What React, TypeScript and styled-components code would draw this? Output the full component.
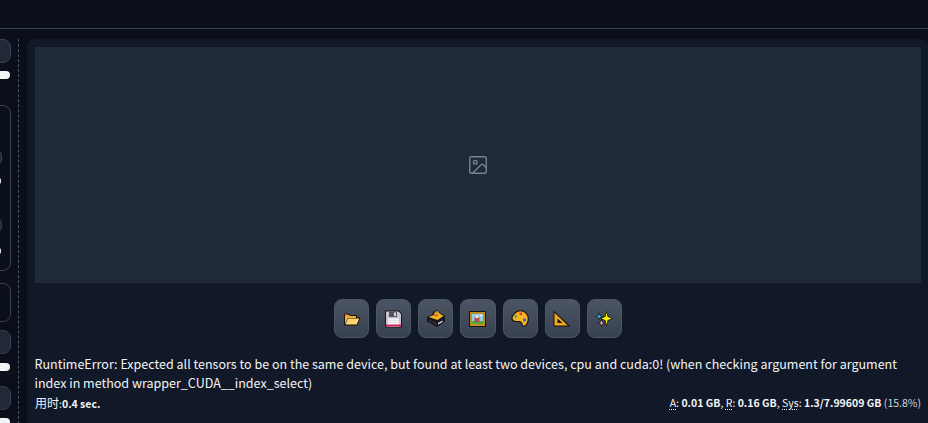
import React from "react";
import styled, { createGlobalStyle } from "styled-components";
import { ImageIcon } from "lucide-react";

const Global = createGlobalStyle`
  html, body { margin: 0; padding: 0; background: #0b0f19; overflow: hidden; }
  body { width: 928px; height: 423px; font-family: "Noto Sans CJK SC", "Noto Sans", sans-serif; }
`;
const Page = styled.div`
  width: 928px; height: 423px; display: flex; flex-direction: column; overflow: hidden; background: #0b0f19;
`;
const TopBar = styled.header`
  height: 28px; flex: none; border-bottom: 1px solid #374151; background: #0b0f19;
`;
const Body = styled.div`
  flex: 1; display: flex; min-height: 0; padding-top: 10px;
`;
const Sidebar = styled.aside`
  width: 18px; flex: none; height: 400px; overflow: hidden; display: flex; flex-direction: column; align-items: flex-end;
  border-right: 1px dashed #4b5563; box-sizing: content-box;
`;
const SideInner = styled.div`
  width: 100px; padding-right: 7px; flex: none; display: flex; flex-direction: column; align-items: stretch;
`;
const Field = styled.div<{ $h: number; $mt: number }>`
  height: ${p => p.$h}px; margin-top: ${p => p.$mt}px; background: #1f2937; border: 1px solid #374151; border-radius: 8px; box-sizing: border-box; flex: none;
`;
const Handle = styled.div<{ $mt: number }>`
  height: 8px; margin-top: ${p => p.$mt}px; margin-right: 1px; background: #f3f4f6; border-radius: 4px; flex: none;
`;
const Group = styled.div`
  height: 166px; margin-top: 26px; border: 1px solid #374151; border-radius: 8px; box-sizing: border-box; flex: none;
  padding: 42px 8px 0 0; display: flex; flex-direction: column; align-items: stretch;
`;
const Outlined = styled.div`
  height: 39px; margin-top: 12px; border: 1px solid #374151; border-radius: 8px; box-sizing: border-box; flex: none;
`;
const Main = styled.main`
  flex: 1; margin-left: 8px; margin-right: 0; height: 390px; background: #111827; border-radius: 8px 8px 0 8px;
  padding: 8px 7px 0 8px; box-sizing: border-box; display: flex; flex-direction: column;
`;
const Preview = styled.div`
  height: 236px; flex: none; background: #1f2937; display: flex; align-items: center; justify-content: center; color: #7b8390;
`;
const Toolbar = styled.div`
  display: flex; justify-content: center; gap: 7px; margin-top: 16px; flex: none;
`;
const ToolButton = styled.button`
  width: 35.15px; height: 39px; padding: 0; display: flex; align-items: center; justify-content: center;
  background: linear-gradient(to bottom, #4b5563, #374151); border: 1px solid #4b5563; border-radius: 8px; box-sizing: border-box;
`;
const ErrorText = styled.div`
  margin-top: 16px; margin-left: -0.5px; font-size: 12.53px; line-height: 19px; color: #f3f4f6; width: 880px;
`;
const Footer = styled.div`
  display: flex; justify-content: space-between; font-size: 10.5px; line-height: 17px; color: #f3f4f6; margin-top: 2px;
`;
const Han = styled.span`font-size: 12px;`;
const Abbr = styled.abbr`
  text-decoration: underline dotted; text-underline-offset: 2px;
`;
const Dim = styled.span`color: #d1d5db;`;

const Icon = styled.svg`display: block;`;

const Folder = () => (
  <Icon width="18" height="14" viewBox="0 0 18 14">
    <path d="M1 1.500h5l1 1.500h7v2.500h3.500L14.500 13.500H1z" fill="#17140c" />
    <path d="M2 3h4l1 1h6v2H5l-3 6z" fill="#f5a93a" />
    <path d="M5 6.500h11.200l-2.400 6H2.400z" fill="#fdd575" />
    <path d="M1.800 1.800h3v1.500h-3z" fill="#d8353a" />
  </Icon>
);
const Floppy = () => (
  <Icon width="17" height="18" viewBox="0 0 17 18">
    <path d="M0 .5h14l3 3V17.500H0z" fill="#17171d" />
    <path d="M1 1.500h12.500l2.500 2.500V16.500H1z" fill="#c9c4ce" />
    <path d="M4 1.500h8V7H4z" fill="#55535f" />
    <path d="M9 2.500h2V6H9z" fill="#d7d3da" />
    <path d="M3 8.500h11v8H3z" fill="#f3f0f3" />
    <path d="M3 10.500h11v.6H3zM3 12.500h11v.6H3z" fill="#d9d5dc" />
    <path d="M1 14.500h15v2H1z" fill="#d3245c" />
  </Icon>
);
const Box = () => (
  <Icon width="18" height="17" viewBox="0 0 18 17">
    <path d="M0 7l5-2 1-3 4-2 2 2 6 4v5.500l-8 5.500-10-5.500z" fill="#17171d" />
    <path d="M1.800 7l5-2 1-3 2.500-1 1.700 2 4.500 3-6 4z" fill="#f6b428" />
    <path d="M6 5l3-1.500 3 2-3 1.500zM9 2l2 1-1 .6-2-1z" fill="#c97f12" />
    <path d="M2 9l8 4v2.500L2 11z" fill="#2a2a30" />
    <path d="M11 13l4.500-2.500v1.500L11 14.500z" fill="#e8e8e8" />
  </Icon>
);
const Picture = () => (
  <Icon width="17" height="16" viewBox="0 0 17 16">
    <path d="M0 0h17v16H0z" fill="#17140c" />
    <path d="M1 1h15v14H1z" fill="#c08f22" />
    <path d="M3 3h11v10H3z" fill="#8ecdf0" />
    <path d="M3 10h11v3H3z" fill="#55a63f" />
    <path d="M5.500 6h5v5h-5z" fill="#b8504a" />
    <path d="M6.500 4.500h3V7h-3z" fill="#ece7e0" />
    <path d="M11 4h2.500v1.200H11z" fill="#ffffff" />
  </Icon>
);
const Palette = () => (
  <Icon width="18" height="17" viewBox="0 0 18 17">
    <path d="M8 .3C13 -.3 17.800 3 17.800 8.500 17.800 13 15.500 16.700 12.500 16.700 10 16.700 11 13.500 9 12.500 7 11.500 4 12.800 1.800 11.200 -.5 9.500 .2 6.500 2 4.500 3.500 2.500 5.500 .7 8 .3z" fill="#17140c" />
    <path d="M8.200 1.400C12.300 .9 16.700 3.800 16.700 8.500 16.700 12.300 14.800 15.600 12.800 15.600 11.300 15.600 12.200 12.800 9.700 11.500 7.300 10.300 4.400 11.700 2.600 10.300 1 9 1.500 6.800 2.900 5.100 4.300 3.300 6 1.800 8.200 1.400z" fill="#f7b322" />
    <path d="M8.500 2.500h2.600v2.600H8.500z" fill="#e23b34" />
    <path d="M3.500 5h2.500v2.500H3.500z" fill="#49a74a" />
    <path d="M12 8.500h3v3h-3z" fill="#2a6fd6" />
  </Icon>
);
const Triangle = () => (
  <Icon width="18" height="17" viewBox="0 0 18 17">
    <path d="M.5 .5V16.500H17.500z" fill="#17140c" />
    <path d="M1.500 2.800V15.500h13.300zM4.500 8.500V13h5z" fill="#f2a81c" fillRule="evenodd" />
  </Icon>
);
const Sparkles = () => (
  <Icon width="18" height="18" viewBox="0 0 18 18">
    <path d="M11.500 0.500L13 6 18 8.500 13 11 11.500 17 10 11 5 8.500 10 6z" fill="#17140c" />
    <path d="M11.500 2.500L12.500 6.700 16.500 8.500 12.500 10.300 11.500 15 10.500 10.300 6.500 8.500 10.500 6.700z" fill="#fff200" />
    <path d="M4 2.500L5.200 5.300 8 6.500 5.200 7.700 4 10.500 2.800 7.700 0 6.500 2.800 5.300z" fill="#17140c" />
    <path d="M4 4L4.800 5.700 6.500 6.500 4.800 7.300 4 9 3.200 7.300 1.500 6.500 3.200 5.700z" fill="#31b5d8" />
    <path d="M6.500 9L7.700 11.800 10.500 13 7.700 14.200 6.500 17 5.300 14.200 2.500 13 5.300 11.800z" fill="#17140c" />
    <path d="M6.500 10.500L7.300 12.200 9 13 7.300 13.800 6.500 15.500 5.700 13.800 4 13 5.700 12.200z" fill="#f29ac0" />
  </Icon>
);

export default function App() {
  return (
    <Page>
      <Global />
      <TopBar />
      <Body>
        <Sidebar>
          <SideInner>
            <Field $h={24} $mt={0} />
            <Handle $mt={8} />
            <Group>
              <Field $h={19} $mt={0} />
              <Handle $mt={10} />
              <Field $h={18} $mt={31} />
              <Handle $mt={13} />
            </Group>
            <Outlined />
            <Field $h={24} $mt={8} />
            <Handle $mt={9} />
            <Field $h={24} $mt={15} />
            <Handle $mt={8} />
          </SideInner>
        </Sidebar>
        <Main>
          <Preview><ImageIcon size={22} strokeWidth={1.5} /></Preview>
          <Toolbar>
            <ToolButton><Folder /></ToolButton>
            <ToolButton><Floppy /></ToolButton>
            <ToolButton><Box /></ToolButton>
            <ToolButton><Picture /></ToolButton>
            <ToolButton><Palette /></ToolButton>
            <ToolButton><Triangle /></ToolButton>
            <ToolButton><Sparkles /></ToolButton>
          </Toolbar>
          <ErrorText>RuntimeError: Expected all tensors to be on the same device, but found at least two devices, cpu and cuda:0! (when checking argument for argument index in method wrapper_CUDA__index_select)</ErrorText>
          <Footer>
            <div><Han>用时</Han>:<b>0.4 sec.</b></div>
            <div>
              <Abbr>A</Abbr>: <b>0.01 GB</b>, <Abbr>R</Abbr>: <b>0.16 GB</b>, <Abbr>Sys</Abbr>: <b>1.3/7.99609 GB</b> <Dim>(15.8%)</Dim>
            </div>
          </Footer>
        </Main>
      </Body>
    </Page>
  );
}
